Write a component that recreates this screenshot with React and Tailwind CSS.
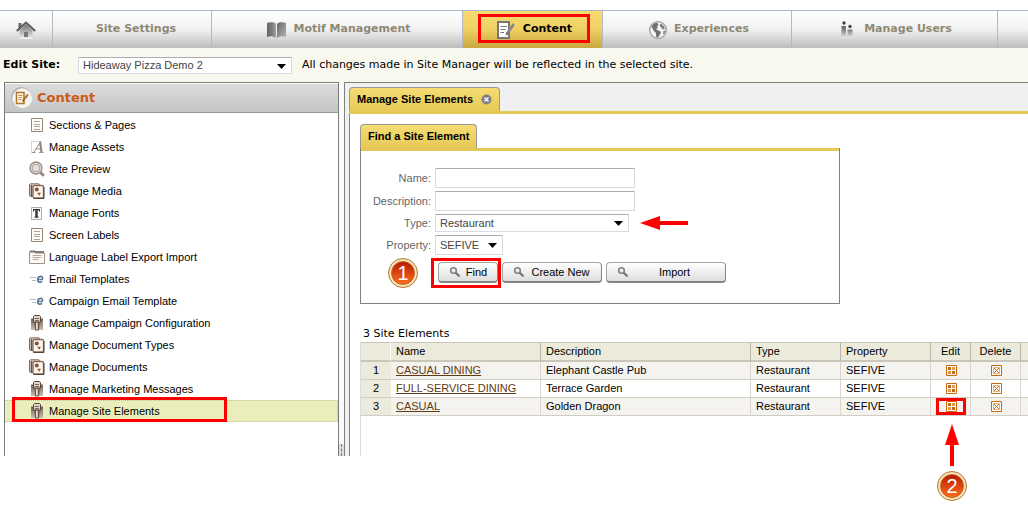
import React from "react";

const VERDANA = "font-['DejaVu_Sans',sans-serif]";

/* ---------- top navigation icons ---------- */

function HomeIcon() {
  return (
    <svg width="20" height="20" viewBox="0 0 20 20" aria-hidden="true">
      <defs>
        <linearGradient id="homeBody" x1="0" y1="0" x2="0" y2="1">
          <stop offset="0" stopColor="#6e6e6e" />
          <stop offset="1" stopColor="#f4f4f4" />
        </linearGradient>
      </defs>
      <path d="M3.500 10.500 10 4.500l6.500 6V19h-13z" fill="url(#homeBody)" />
      <path d="M8 12h4v5H8z" fill="#777" />
      <path d="M2.500 3h3v4l-3 2.500z" fill="#666" />
      <path d="M.8 11 10 2.800 19.200 11" fill="none" stroke="#5c5c5c" strokeWidth="2.200" />
    </svg>
  );
}

function BookIcon() {
  return (
    <svg width="19" height="16" viewBox="0 0 19 16" aria-hidden="true">
      <defs>
        <linearGradient id="bookLeft" x1="0" y1="0" x2="1" y2="0">
          <stop offset="0" stopColor="#666" />
          <stop offset="0.700" stopColor="#858585" />
          <stop offset="1" stopColor="#a5a5a5" />
        </linearGradient>
        <linearGradient id="bookRight" x1="0" y1="0" x2="1" y2="1">
          <stop offset="0" stopColor="#666" />
          <stop offset="1" stopColor="#b5b5b5" />
        </linearGradient>
      </defs>
      <path d="M0 1C3 0 6.500 0 9 1.800V16c-3-2-6-2-9-1z" fill="url(#bookLeft)" />
      <path d="M10 1.800C12.500 0 16 0 19 1v14c-3-1-6-1-9 1z" fill="url(#bookRight)" />
    </svg>
  );
}

function NoteIcon() {
  return (
    <svg width="18" height="18" viewBox="0 0 18 18" aria-hidden="true">
      <path d="M1 1h11v16H1z" fill="#fff" stroke="#777" strokeWidth="2" />
      <path d="M3.500 5.500h6.500M3.500 8.500h5M3.500 11.500h3.500" stroke="#777" />
      <path d="m16.800 3-7 10" stroke="#8a8a8a" strokeWidth="2.800" />
      <path d="m9.800 10.800-1.500 4.200 3.500-2.500z" fill="#666" />
    </svg>
  );
}

function GlobeIcon() {
  return (
    <svg width="18" height="18" viewBox="0 0 18 18" aria-hidden="true">
      <circle cx="9" cy="9" r="8.300" fill="#f4f4f4" stroke="#9a9a9a" strokeWidth="1.300" />
      <path d="M2.500 5.500C4 3 6 1.800 8.500 1.800L9.500 4 8 5.500 9 7 6.500 8l3 1.500 2.500 1.500-1 2.500-2 3-1.800-.5L7 12 4.500 9.500z" fill="#707070" />
      <path d="M11 2.500 14 4l2 3.500-2.500 1-1-2-1.500-1zM14.500 10l2-.5-1 3-1.500 1z" fill="#7c7c7c" />
    </svg>
  );
}

function UsersIcon() {
  return (
    <svg width="12" height="18" viewBox="0 0 12 18" aria-hidden="true">
      <defs>
        <linearGradient id="people" x1="0" y1="0" x2="0" y2="1">
          <stop offset="0" stopColor="#666" />
          <stop offset="0.400" stopColor="#8c8c8c" />
          <stop offset="1" stopColor="#ececec" />
        </linearGradient>
      </defs>
      <circle cx="3" cy="2" r="1.700" fill="#444" />
      <circle cx="9" cy="5.500" r="1.700" fill="#444" />
      <path d="M.5 5H5v12H.5zM6.500 8.500H11.500V17h-5z" fill="url(#people)" />
    </svg>
  );
}

/* ---------- sidebar icons ---------- */

function PageIcon() {
  return (
    <svg width="16" height="16" viewBox="0 0 16 16" aria-hidden="true">
      <path d="M2.500 1.500h11v13h-11z" fill="#fdfbf8" stroke="#958779" />
      <path d="M5 4.500h6M5 7.500h6M5 9.500h6M5 12.500h6" stroke="#b0a498" />
    </svg>
  );
}

function AssetIcon() {
  return (
    <svg width="16" height="16" viewBox="0 0 16 16" aria-hidden="true">
      <path d="M2.500 2.500h8M2.500 2.500v11" stroke="#b0b0b0" strokeDasharray="1 1" />
      <path d="M4.500 13.500 11.500 3" fill="none" stroke="#9c9188" />
      <path d="m11 2.500 1.500 11" stroke="#91867c" strokeWidth="2.200" />
      <path d="M6.500 10h6M3 13.500h3.500M10 13.500h4.500" stroke="#9c9188" />
    </svg>
  );
}

function PreviewIcon() {
  return (
    <svg width="16" height="16" viewBox="0 0 16 16" aria-hidden="true">
      <circle cx="7" cy="7" r="6" fill="#e6dcd5" stroke="#9c8c82" strokeWidth="1.300" />
      <circle cx="7" cy="7" r="3.900" fill="#dfe1e1" stroke="#ad9d93" />
      <path d="m11.500 11.500 3.300 3.300" stroke="#96867b" strokeWidth="2.800" />
    </svg>
  );
}

function MediaIcon() {
  return (
    <svg width="16" height="16" viewBox="0 0 16 16" aria-hidden="true">
      <rect x=".5" y=".8" width="10" height="12.500" rx="1" fill="#e8dcd3" stroke="#84695a" />
      <path d="M2.500 2v12M4 15h11" stroke="#6b5142" strokeWidth="1.500" />
      <rect x="4" y="2.500" width="10.500" height="12.500" rx="1.500" fill="#fbf7f3" stroke="#84695a" strokeWidth="1.300" />
      <path d="M15 4v11.500H5" stroke="#5a4336" fill="none" />
      <circle cx="7.800" cy="6.500" r="2" fill="#8f4d28" />
      <path d="M8.300 9.800h3.600l-1.800 3z" fill="#8f4d28" />
    </svg>
  );
}

function FontIcon() {
  return (
    <svg width="16" height="16" viewBox="0 0 16 16" aria-hidden="true">
      <path d="M2.500 2.500h10v12h-10z" fill="#fafcfd" stroke="#a5b0b6" />
      <path d="M4 4h7v2.500h-.8L9.500 5H8.700v6.500l1 .5v.8H5.300V12l1-.5V5h-.8l-.7 1.500H4z" fill="#2f3438" />
    </svg>
  );
}

function LanguageIcon() {
  return (
    <svg width="16" height="16" viewBox="0 0 16 16" aria-hidden="true">
      <path d="M.5 2.500h5l.5 1.500h9.500v10.500H.5z" fill="#fbf8f5" stroke="#a09286" />
      <path d="M1 2.500h5M6 3h9" stroke="#85766b" strokeWidth="1.800" />
      <path d="M3.500 6.500h9M3.500 8.500h9M3.500 10.500h6" stroke="#b8aca2" />
    </svg>
  );
}

function EmailIcon() {
  return (
    <svg width="16" height="16" viewBox="0 0 16 16" aria-hidden="true">
      <path d="M1 6.500h6M3 9.500h4" stroke="#b4bac0" />
      <path d="M9 8.500h4.300c.8-2.300-.4-3.300-1.800-3.100-1.900.2-2.900 2-2.800 3.700.1 2.300 2.500 2.700 4.500 1.300" fill="none" stroke="#5f7c98" strokeWidth="1.700" />
    </svg>
  );
}

function ClipIcon() {
  return (
    <svg width="16" height="16" viewBox="0 0 16 16" aria-hidden="true">
      <defs>
        <linearGradient id="clip" x1="0" y1="0" x2="0" y2="1">
          <stop offset="0" stopColor="#76604f" />
          <stop offset="1" stopColor="#c9beb5" />
        </linearGradient>
      </defs>
      <path d="M2 3.500h12v11.500H2z" fill="url(#clip)" />
      <path d="M4.500 1.500 5.500.5h5l1 1V7h-7z" fill="#ded4cc" stroke="#594536" />
      <path d="M6 3.500h4M6 5.500h4" stroke="#7b6858" />
      <path d="M5.500 7.500h5l-.5 8H6z" fill="#6b5647" />
      <path d="M7 8h1.800v6.500H7z" fill="#e9e1db" />
    </svg>
  );
}

/* ---------- small shared drawings ---------- */

function HeaderNoteIcon() {
  return (
    <svg width="22" height="22" viewBox="0 0 22 22" aria-hidden="true">
      <circle cx="10.500" cy="10.500" r="10.500" fill="#b0b0b0" />
      <circle cx="11.200" cy="11.200" r="10" fill="#f5f3f0" />
      <path d="M5.500 5.500H13v11H5.500z" fill="#fff6e6" stroke="#b0752f" strokeWidth="1.500" />
      <path d="M7.500 8.500h4M7.500 10.500h3.500M7.500 12.500h2.500" stroke="#c08a4a" />
      <path d="m17 7.500-5 6" stroke="#b0752f" strokeWidth="2" />
      <path d="m12 12-1 3 2.500-1.500z" fill="#8a5516" />
    </svg>
  );
}

function CloseIcon() {
  return (
    <svg width="11" height="11" viewBox="0 0 11 11" aria-hidden="true">
      <circle cx="5.500" cy="5.500" r="5" fill="#7f7f86" />
      <path d="m3.500 3.500 4 4m0-4-4 4" stroke="#fff" strokeWidth="1.300" />
    </svg>
  );
}

function SearchIcon() {
  return (
    <svg className="shrink-0" width="12" height="12" viewBox="0 0 12 12" aria-hidden="true">
      <circle cx="4.500" cy="4.500" r="2.800" fill="#eee" stroke="#808080" strokeWidth="1.600" />
      <path d="m6.800 6.800 3.700 3.700" stroke="#6e6e6e" strokeWidth="2" />
    </svg>
  );
}

function EditGridIcon() {
  return (
    <svg className="block" width="11" height="11" viewBox="0 0 11 11" aria-hidden="true">
      <path d="M.5.500h10v10H.500z" fill="#fff" stroke="#c8690f" />
      <path d="M2 2h3v3H2zM6 6h3v3H6z" fill="#c8690f" />
      <path d="M6 2h3v3H6zM2 6h3v3H2z" fill="#dc9b58" />
    </svg>
  );
}

function DeleteIcon() {
  return (
    <svg className="block" width="11" height="11" viewBox="0 0 11 11" aria-hidden="true">
      <path d="M.5.500h10v10H.500z" fill="#fff" stroke="#c8690f" />
      <path d="M2.500 2.500h6v6h-6z" fill="#fff" stroke="#e3b27f" />
      <path d="m3 3 5 5m0-5-5 5" stroke="#c8690f" />
    </svg>
  );
}

function DropArrow({ className }) {
  return (
    <svg className={"pointer-events-none absolute top-1/2 -mt-[2px] " + className} width="9" height="5" viewBox="0 0 9 5" aria-hidden="true">
      <path d="M0 0h9L4.500 5z" fill="#000" />
    </svg>
  );
}

function StepBadge({ children }) {
  return (
    <span className="flex size-[30px] items-center justify-center rounded-full border border-[#b5762b] bg-[#f7e3c0] p-[2px]">
      <span className="flex size-full items-center justify-center rounded-full border border-[#c0661c] bg-linear-to-b from-[#b81404] to-[#ff6a1c] font-['Liberation_Sans',Arial,sans-serif] text-[20px] leading-none text-white">
        {children}
      </span>
    </span>
  );
}

function Highlight({ className }) {
  return <span aria-hidden="true" className={"pointer-events-none absolute z-10 border-3 border-[#ff0000] " + className} />;
}

/* ---------- page parts ---------- */

const NAV = [
  { label: "Site Settings", gap: "pl-2" },
  { label: "Motif Management", icon: BookIcon, gap: "gap-[7px] pl-1" },
  { label: "Content", icon: NoteIcon, active: true, gap: "gap-2 pl-1" },
  { label: "Experiences", icon: GlobeIcon, gap: "gap-[7px] pl-1" },
  { label: "Manage Users", icon: UsersIcon, gap: "gap-[11px] pl-1" },
];

function TopNav() {
  return (
    <nav
      className={
        "mt-[10px] grid h-[38px] grid-cols-[53px_159fr_251fr_140fr_189fr_206fr_30fr] border-t border-[#a9b6d0] bg-linear-to-b from-white via-[#f1f1f1] to-[#bdbdbd] text-[11px] font-bold text-[#8e8874] " +
        VERDANA
      }
    >
      <a href="#home" aria-label="Home" className="flex items-center justify-center border-r border-[#b3b8c6]">
        <HomeIcon />
      </a>
      {NAV.map(({ label, icon: Icon, active, gap }) => (
        <a
          key={label}
          href="#nav"
          className={
            "relative flex items-center justify-center border-r border-[#b3b8c6] whitespace-nowrap " +
            gap +
            (active ? " bg-linear-to-b from-[#f8dc6e] via-[#efd064] to-[#c9a73f] text-black" : "")
          }
        >
          {Icon && <Icon />}
          {label}
          {active && <Highlight className="top-[3px] right-[12px] bottom-[5px] left-[15px]" />}
        </a>
      ))}
    </nav>
  );
}

function SelectBox({ id, value, className, arrow = "right-[6px]" }) {
  return (
    <span className={"relative inline-block " + className}>
      <select
        id={id}
        defaultValue={value}
        className="block size-full appearance-none border border-[#d8dae4] border-t-[#abadb3] bg-white pl-1 text-[11px] leading-none text-[#444]"
      >
        <option>{value}</option>
      </select>
      <DropArrow className={arrow} />
    </span>
  );
}

const MENU = [
  ["Sections & Pages", PageIcon],
  ["Manage Assets", AssetIcon],
  ["Site Preview", PreviewIcon],
  ["Manage Media", MediaIcon],
  ["Manage Fonts", FontIcon],
  ["Screen Labels", PageIcon],
  ["Language Label Export Import", LanguageIcon],
  ["Email Templates", EmailIcon],
  ["Campaign Email Template", EmailIcon],
  ["Manage Campaign Configuration", ClipIcon],
  ["Manage Document Types", MediaIcon],
  ["Manage Documents", MediaIcon],
  ["Manage Marketing Messages", ClipIcon],
  ["Manage Site Elements", ClipIcon],
];

function Sidebar() {
  return (
    <aside className="w-[335px] shrink-0 border border-b-0 border-[#7b7b7b]">
      <h2
        className={
          "mt-px flex h-[29px] items-center gap-1 border-b border-[#999] bg-linear-to-b from-[#dcdcdc] to-[#c5c5c5] pl-[6px] text-[13px] font-bold text-[#c95a17] " +
          VERDANA
        }
      >
        <HeaderNoteIcon />
        Content
      </h2>
      <ul className="pt-px">
        {MENU.map(([label, Icon], i) => {
          const selected = i === MENU.length - 1;
          return (
            <li
              key={label}
              className={
                "relative border-y border-dotted " +
                (selected ? "border-r border-[#d9c64a] bg-[#e9eebb]" : "border-transparent")
              }
            >
              <a href="#section" className="flex h-5 items-center gap-1 pl-6 text-[11px] text-black">
                <Icon />
                {label}
              </a>
              {selected && <Highlight className="-top-[4px] left-[7px] h-[25px] w-[215px]" />}
            </li>
          );
        })}
      </ul>
    </aside>
  );
}

function Field({ id, label, children }) {
  return (
    <>
      <label htmlFor={id} className="text-right text-[11px] text-[#666]">
        {label}
      </label>
      <div className="flex items-center gap-[11px]">{children}</div>
    </>
  );
}

function ActionButton({ label, className }) {
  return (
    <button
      type="button"
      className={
        "flex h-[21px] items-center rounded-[4px] border border-[#a5a5a5] border-r-[#858585] border-b-2 border-b-[#858585] bg-linear-to-b from-white to-[#dedede] pr-[5px] pl-[10px] text-[11px] text-black " +
        className
      }
    >
      <SearchIcon />
      <span className="flex-1 text-center">{label}</span>
    </button>
  );
}

function FindForm() {
  const input = "h-5 w-[200px] border border-[#d8dae4] border-t-[#abadb3] bg-white px-1 text-[11px]";
  return (
    <section className="w-[480px]">
      <div className="flex">
        <h3 className="flex h-[24px] items-center rounded-t-[4px] border border-b-0 border-[#999] bg-linear-to-b from-[#f6dc72] to-[#e6c956] px-[7px] text-[11px] font-bold whitespace-nowrap">
          Find a Site Element
        </h3>
      </div>
      <form className="border border-t-0 border-[#808080]">
        <div className="h-[3px] bg-[#e5c857]" />
        <div className="grid grid-cols-[70px_1fr] items-center gap-x-1 gap-y-[3px] pt-[17px] pb-[20px]">
          <Field id="name" label="Name:">
            <input id="name" type="text" className={input} />
          </Field>
          <Field id="description" label="Description:">
            <input id="description" type="text" className={input} />
          </Field>
          <Field id="type" label="Type:">
            <SelectBox id="type" value="Restaurant" className="h-[18px] w-[194px]" />
            <svg width="48" height="16" viewBox="0 0 48 16" className="-my-px" aria-hidden="true">
              <path d="M0 8 20 1v5h28v4H20v5z" fill="#ff0000" />
            </svg>
          </Field>
          <Field id="property" label="Property:">
            <SelectBox id="property" value="SEFIVE" className="h-5 w-[68px]" />
          </Field>
          <div className="relative col-span-2 mt-1 flex gap-1 pl-[77px]">
            <span className="absolute -top-[4px] left-[27px]">
              <StepBadge>1</StepBadge>
            </span>
            <span className="relative">
              <ActionButton label="Find" className="w-[60px]" />
              <Highlight className="-top-[4px] -right-[3px] -bottom-[5px] -left-[7px]" />
            </span>
            <ActionButton label="Create New" className="w-[100px]" />
            <ActionButton label="Import" className="w-[120px]" />
          </div>
        </div>
      </form>
    </section>
  );
}

const ROWS = [
  ["CASUAL DINING", "Elephant Castle Pub"],
  ["FULL-SERVICE DINING", "Terrace Garden"],
  ["CASUAL", "Golden Dragon"],
];

function ElementsTable() {
  const head = "border-r border-[#b9b7ac] pl-[5px] text-left font-normal";
  const cell = "border-r border-[#d8d5cc] pl-[5px]";
  return (
    <table className="w-full table-fixed border-separate border-spacing-0 text-[11px] leading-[17px] text-black">
      <colgroup>
        <col className="w-[30px]" />
        <col className="w-[150px]" />
        <col className="w-[210px]" />
        <col className="w-[90px]" />
        <col className="w-[90px]" />
        <col className="w-[40px]" />
        <col className="w-[50px]" />
        <col />
      </colgroup>
      <thead>
        <tr className="h-[20px] bg-[#ebeadb] [&>th]:border-t [&>th]:border-b-2 [&>th]:border-t-[#cbc7b8] [&>th]:border-b-[#cbc7b8]">
          <th className="border-r border-white" aria-label="Row" />
          <th className={head}>Name</th>
          <th className={head}>Description</th>
          <th className={head}>Type</th>
          <th className={head}>Property</th>
          <th className="border-r border-[#b9b7ac] text-center font-normal">Edit</th>
          <th className="border-r border-[#b9b7ac] text-center font-normal">Delete</th>
          <th aria-label="More" />
        </tr>
      </thead>
      <tbody>
        {ROWS.map(([name, description], i) => (
          <tr
            key={name}
            className={
              "h-[18px] [&>td]:border-b [&>td]:border-b-[#d0cdc5] " + (i % 2 === 0 ? "bg-[#f5f3f0]" : "bg-white")
            }
          >
            <td className="bg-[#ebeadb] text-center">{i + 1}</td>
            <td className={cell}>
              <a href="#element" className="text-[#5f3a12] underline">
                {name}
              </a>
            </td>
            <td className={cell}>{description}</td>
            <td className={cell}>Restaurant</td>
            <td className={cell}>SEFIVE</td>
            <td className="relative border-r border-[#d8d5cc]">
              <button type="button" aria-label={"Edit " + name} className="flex w-full justify-center pl-px">
                <EditGridIcon />
              </button>
              {i === ROWS.length - 1 && (
                <>
                  <Highlight className="top-0 right-[4px] bottom-0 left-[5px]" />
                  <span className="absolute inset-x-0 top-[26px] flex flex-col items-center gap-[5px] pl-[3px]">
                    <svg width="16" height="42" viewBox="0 0 16 42" aria-hidden="true">
                      <path d="m8 0 7 21h-5v21H6V21H1z" fill="#ff0000" />
                    </svg>
                    <StepBadge>2</StepBadge>
                  </span>
                </>
              )}
            </td>
            <td className="border-r border-[#d8d5cc]">
              <button type="button" aria-label={"Delete " + name} className="flex w-full justify-center pl-px">
                <DeleteIcon />
              </button>
            </td>
            <td />
          </tr>
        ))}
      </tbody>
    </table>
  );
}

export default function App() {
  return (
    <div className="flow-root min-h-screen bg-white font-['Liberation_Sans',Arial,sans-serif] text-black">
      <TopNav />
      <div className={"flex h-[34px] items-center bg-[#f8f8ee] pl-[3px] text-[11px] " + VERDANA}>
        <label htmlFor="site" className="w-[75px] font-bold">
          Edit Site:
        </label>
        <span className="font-['Liberation_Sans',Arial,sans-serif]">
          <SelectBox id="site" value="Hideaway Pizza Demo 2" className="mt-px block h-[17px] w-[214px]" />
        </span>
        <p className="pl-[10px]">All changes made in Site Manager will be reflected in the selected site.</p>
      </div>
      <div className="flex pl-1">
        <Sidebar />
        <div className="flex w-[5px] shrink-0 items-end bg-[#fafafa]">
          <div className="flex h-3 w-full justify-center bg-[#dedede]">
            <div className="border-l border-dashed border-[#777]" />
          </div>
        </div>
        <main className="min-w-0 flex-1 border-t border-l border-[#808080] bg-[#f0f0f0] pt-1 pl-1">
          <div className="flex">
            <h2 className="flex h-[24px] items-center gap-2 rounded-t-[4px] border border-b-0 border-[#999] bg-linear-to-b from-[#f6dc72] to-[#e6c956] px-[7px] text-[11px] font-bold whitespace-nowrap">
              Manage Site Elements
              <button type="button" aria-label="Close tab">
                <CloseIcon />
              </button>
            </h2>
          </div>
          <div className="h-[3px] bg-[#e5c857]" />
          <div className="border-l border-[#808080] bg-white pt-[10px] pl-[10px]">
            <FindForm />
            <p className={"pt-[21px] pl-[3px] text-[11px] leading-[17px] " + VERDANA}>3 Site Elements</p>
            <div className="border-l border-[#dcdcdc] pb-10">
              <ElementsTable />
            </div>
          </div>
        </main>
      </div>
    </div>
  );
}
